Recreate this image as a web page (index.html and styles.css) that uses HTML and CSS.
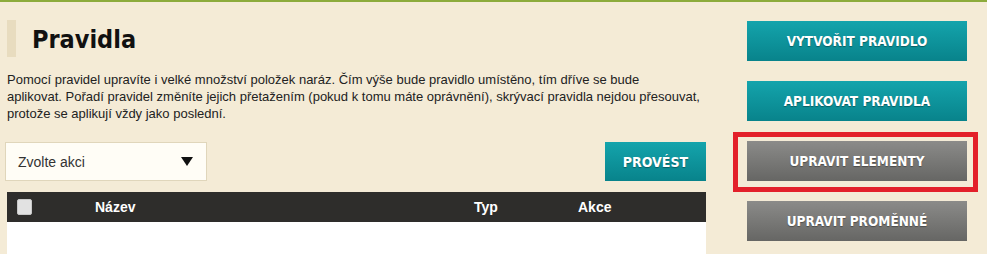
FILE: index.html
```html
<!DOCTYPE html>
<html lang="cs">
<head>
  <meta charset="UTF-8">
  <title>Pravidla</title>
  <link rel="stylesheet" href="styles.css">
</head>
<body>
  <div class="topline"></div>
  <div class="page">
    <div class="content">
      <h1 class="title">Pravidla</h1>
      <p class="intro">Pomocí pravidel upravíte i velké množství položek naráz. Čím výše bude pravidlo umístěno, tím dříve se bude<br>
        aplikovat. Pořadí pravidel změníte jejich přetažením (pokud k tomu máte oprávnění), skrývací pravidla nejdou přesouvat, protože se aplikují vždy jako poslední.</p>

      <div class="bulk">
        <div class="select">
          <span>Zvolte akci</span>
          <span class="caret"></span>
        </div>
        <button class="btn btn-teal btn-run">PROVÉST</button>
      </div>

      <table class="rules">
        <thead>
          <tr>
            <th class="col-check"><span class="check"></span></th>
            <th class="col-name">Název</th>
            <th class="col-type">Typ</th>
            <th class="col-act">Akce</th>
          </tr>
        </thead>
        <tbody>
          <tr><td colspan="4"></td></tr>
        </tbody>
      </table>
    </div>

    <div class="sidebar">
      <button class="btn btn-teal">VYTVOŘIT PRAVIDLO</button>
      <button class="btn btn-teal">APLIKOVAT PRAVIDLA</button>
      <div class="marked">
        <button class="btn btn-gray">UPRAVIT ELEMENTY</button>
      </div>
      <button class="btn btn-gray">UPRAVIT PROMĚNNÉ</button>
    </div>
  </div>
</body>
</html>
```

FILE: styles.css
```css
body {
  margin: 0;
  background: #f4ebd6;
  font-family: "Liberation Sans", Arial, sans-serif;
  color: #222;
  overflow: hidden;
}
.topline {
  height: 2px;
  background: #8cab3c;
}
.page {
  display: flex;
  gap: 41px;
  padding: 0 20px 0 7px;
}
.content {
  width: 699px;
}
.title {
  margin: 18px 0 0;
  height: 37px;
  border-left: 9px solid #e8dcbf;
  padding-left: 16px;
  font: bold 25px "DejaVu Sans Condensed", "DejaVu Sans", sans-serif;
  font-stretch: condensed;
  line-height: 40px;
  color: #111;
}
.intro {
  margin: 14px 0 0;
  font-size: 13px;
  line-height: 17px;
  color: #222;
}
.bulk {
  display: flex;
  justify-content: space-between;
  margin-top: 20px;
}
.select {
  margin-left: -2px;
  width: 202px;
  height: 39px;
  box-sizing: border-box;
  border: 1px solid #e0d6bb;
  background: #fffdf6;
  display: flex;
  align-items: center;
  justify-content: space-between;
  padding: 0 13px 0 12px;
  font-size: 14px;
  color: #333;
}
.caret {
  width: 0;
  height: 0;
  border-left: 6px solid transparent;
  border-right: 6px solid transparent;
  border-top: 9px solid #111;
}
.btn {
  display: block;
  width: 220px;
  height: 40px;
  border: none;
  padding: 0;
  color: #fff;
  font: bold 13.5px "DejaVu Sans Condensed", "DejaVu Sans", sans-serif;
  font-stretch: condensed;
  text-shadow: 0 1px 1px rgba(0, 0, 0, .35);
  cursor: pointer;
}
.btn-teal {
  background: linear-gradient(#14a4ac, #08838b);
}
.btn-gray {
  background: linear-gradient(#8b8b89, #666664);
}
.btn-run {
  width: 101px;
  height: 39px;
  font-size: 14px;
}
.rules {
  margin-top: 11px;
  width: 100%;
  border-collapse: collapse;
}
.rules th {
  height: 30px;
  padding: 0;
  background: #2e2d2b;
  color: #fff;
  text-align: left;
  font-size: 14px;
  font-weight: bold;
}
.col-check {
  width: 88px;
}
.check {
  display: block;
  margin-left: 10px;
  width: 15px;
  height: 16px;
  background: #e2e2e2;
  border: 1px solid #c8c8c8;
  border-radius: 2px;
  box-sizing: border-box;
}
.col-name {
  width: 379px;
}
.col-type {
  width: 104px;
}
.rules td {
  height: 40px;
  background: #fff;
}
.sidebar {
  display: flex;
  flex-direction: column;
  gap: 20px;
  padding-top: 19px;
}
.marked {
  position: relative;
}
.marked::after {
  content: "";
  position: absolute;
  left: -14px;
  top: -9px;
  right: -11px;
  bottom: -11px;
  border: 5px solid #e3202a;
  pointer-events: none;
}
```
